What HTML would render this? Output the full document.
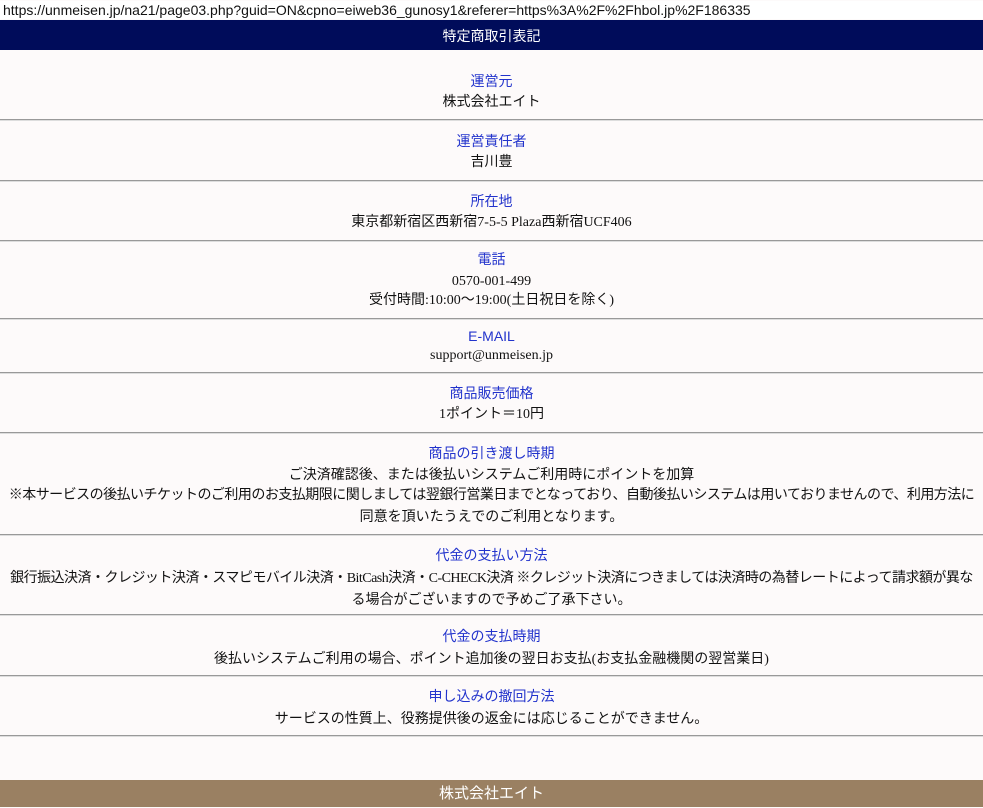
<!DOCTYPE html>
<html><head><meta charset="utf-8"><style>
body{margin:0;width:983px;height:807px;background:#fdfafa;position:relative;overflow:hidden;font-family:"Liberation Serif","Noto Sans CJK JP",serif;font-size:14px;color:#111}
.url{position:absolute;top:1px;font-family:"Liberation Sans","Noto Sans CJK JP",sans-serif;font-size:14px;line-height:18px;color:#111;white-space:nowrap;background:#fff;width:983px;left:0;padding-left:3px}
.hd{position:absolute;left:0;top:20px;width:983px;height:30px;background:#000c5a;color:#fff;text-align:center;line-height:32px;font-family:"Liberation Sans","Noto Sans CJK JP",sans-serif;font-size:14px}
.ft{position:absolute;left:0;top:780px;width:983px;height:27px;background:#9a8062;color:#fff;text-align:center;line-height:28px;font-family:"Liberation Sans","Noto Sans CJK JP",sans-serif;font-size:15px}
.s{position:absolute;left:0;width:983px;text-align:center;line-height:20px}
.s div{height:20px;white-space:nowrap}
.s div:not(.t){position:relative;top:3px}
.t{color:#2233cc;font-family:"Liberation Sans","Noto Sans CJK JP",sans-serif;position:relative;top:1px}
.n{letter-spacing:-0.52px}
.ln{position:absolute;left:0;width:983px;height:1px;background:#999;border-bottom:1px solid #ddd}
</style></head><body>
<div class="url">https://unmeisen.jp/na21/page03.php?guid=ON&amp;cpno=eiweb36_gunosy1&amp;referer=https%3A%2F%2Fhbol.jp%2F186335</div>
<div class="hd">特定商取引表記</div>

<div class="s" style="top:70px"><div class="t">運営元</div><div>株式会社エイト</div></div>
<div class="ln" style="top:119px"></div>
<div class="s" style="top:130px"><div class="t">運営責任者</div><div>吉川豊</div></div>
<div class="ln" style="top:180px"></div>
<div class="s" style="top:190px"><div class="t">所在地</div><div>東京都新宿区西新宿7-5-5 Plaza西新宿UCF406</div></div>
<div class="ln" style="top:240px"></div>
<div class="s" style="top:249px;line-height:19.5px"><div class="t" style="height:19.5px">電話</div><div style="height:19.5px">0570-001-499</div><div>受付時間:10:00～19:00(土日祝日を除く)</div></div>
<div class="ln" style="top:318px"></div>
<div class="s" style="top:326px;line-height:18px"><div class="t" style="height:18px">E-MAIL</div><div>support@unmeisen.jp</div></div>
<div class="ln" style="top:372px"></div>
<div class="s" style="top:382px"><div class="t">商品販売価格</div><div>1ポイント＝10円</div></div>
<div class="ln" style="top:432px"></div>
<div class="s" style="top:442px;line-height:21px"><div class="t" style="height:20px">商品の引き渡し時期</div><div style="height:20px">ご決済確認後、または後払いシステムご利用時にポイントを加算</div><div class="n" style="height:22px">※本サービスの後払いチケットのご利用のお支払期限に関しましては翌銀行営業日までとなっており、自動後払いシステムは用いておりませんので、利用方法に</div><div>同意を頂いたうえでのご利用となります。</div></div>
<div class="ln" style="top:534px"></div>
<div class="s" style="top:543px;line-height:22px"><div class="t" style="height:22px">代金の支払い方法</div><div class="n" style="height:22px">銀行振込決済・クレジット決済・スマピモバイル決済・BitCash決済・C-CHECK決済 ※クレジット決済につきましては決済時の為替レートによって請求額が異な</div><div>る場合がございますので予めご了承下さい。</div></div>
<div class="ln" style="top:614px"></div>
<div class="s" style="top:625px;line-height:21px"><div class="t" style="height:21px">代金の支払時期</div><div>後払いシステムご利用の場合、ポイント追加後の翌日お支払(お支払金融機関の翌営業日)</div></div>
<div class="ln" style="top:675px"></div>
<div class="s" style="top:684px;line-height:22px"><div class="t" style="height:22px">申し込みの撤回方法</div><div>サービスの性質上、役務提供後の返金には応じることができません。</div></div>
<div class="ln" style="top:735px"></div>

<div class="ft">株式会社エイト</div>
</body></html>
